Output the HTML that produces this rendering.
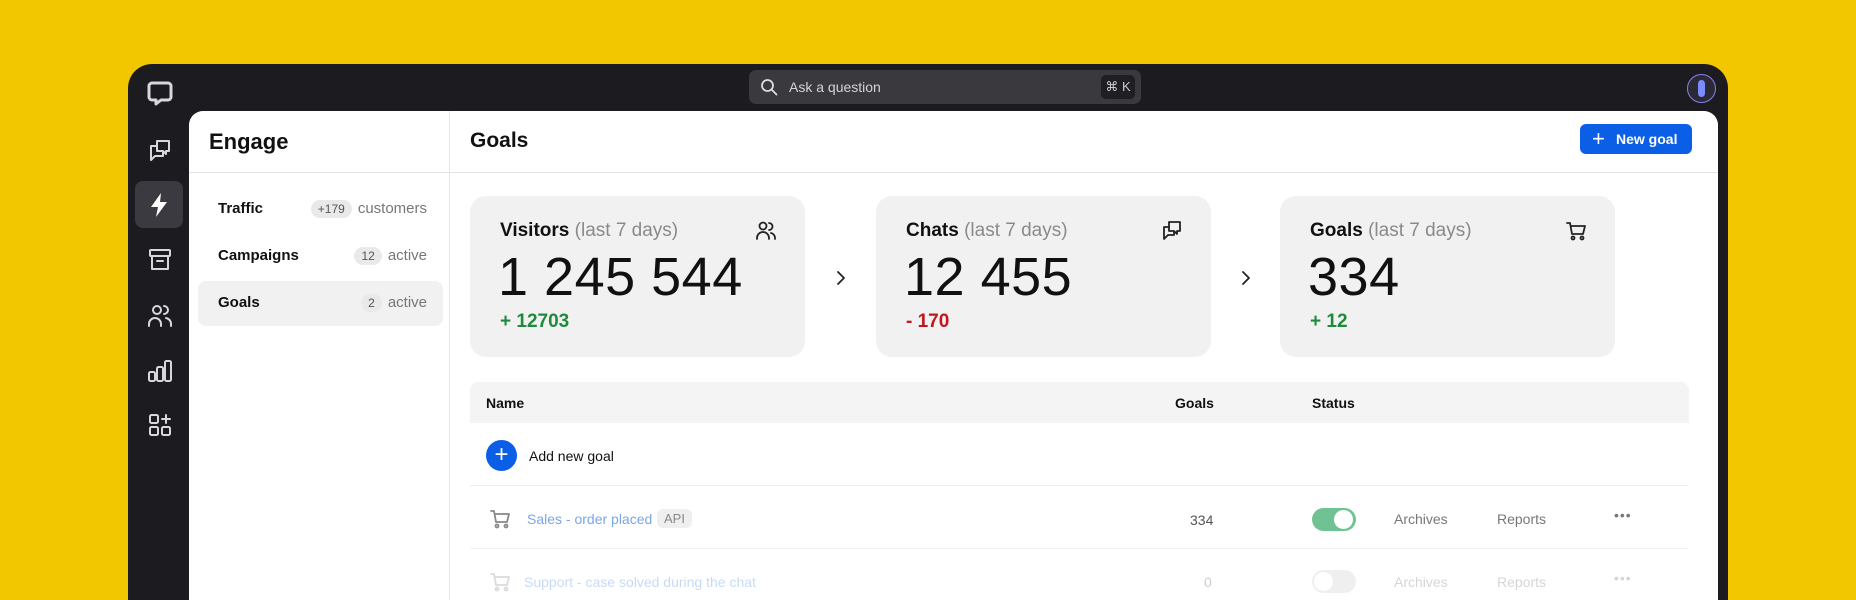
<!DOCTYPE html>
<html><head><style>
*{box-sizing:border-box;margin:0;padding:0}
html,body{width:1856px;height:600px;overflow:hidden}
body{background:#f2c700;font-family:"Liberation Sans",sans-serif;position:relative}
.frame{position:absolute;left:128px;top:64px;width:1600px;height:536px;background:#1c1b20;border-radius:24px 24px 0 0}
.panel{position:absolute;left:189px;top:111px;width:1529px;height:489px;background:#fff;border-radius:14px 14px 0 0;overflow:hidden}
.abs{position:absolute}
.ico{position:absolute;stroke:#d8d8dc;fill:none;stroke-width:2;stroke-linecap:round;stroke-linejoin:round}
.search{position:absolute;left:749px;top:70px;width:392px;height:34px;background:#3a393e;border-radius:7px}
.card{position:absolute;top:85px;width:335px;height:161px;background:#f1f1f1;border-radius:16px}
.card .t{position:absolute;left:30px;top:24px;font-size:19px;font-weight:bold;color:#111}
.card .t span{color:#8a8a8a;font-weight:normal}
.card .n{position:absolute;left:28px;top:50px;font-size:54px;color:#111;letter-spacing:0.5px}
.card .d{position:absolute;left:30px;top:115px;font-size:19px;font-weight:bold}
.nav{position:absolute;left:9px;width:245px;height:45px;border-radius:8px;font-size:15px}
.nav b{position:absolute;left:20px;top:13px;color:#111}
.nav .r{position:absolute;right:16px;top:13px;color:#777}
.badge{display:inline-block;background:#e9e9e9;border-radius:9px;font-size:12px;padding:2px 7px;margin-right:6px;color:#555}
.svgi{stroke:#222;fill:none;stroke-width:1.8;stroke-linecap:round;stroke-linejoin:round}
</style></head><body>
<div class="frame"></div>
<svg class="ico" style="left:146px;top:80px" width="28" height="28" viewBox="0 0 28 28"><path d="M6 3h16a3 3 0 0 1 3 3v11a3 3 0 0 1-3 3h-7l-5 4v-4H6a3 3 0 0 1-3-3V6a3 3 0 0 1 3-3z" stroke-width="3"/></svg>
<svg class="ico" style="left:147px;top:138px" width="26" height="26" viewBox="0 0 26 26"><path d="M10 3h12v10h-3v3l-3-3h-6z"/><path d="M10 8H4v14l4-4h8v-4"/></svg>
<div class="abs" style="left:135px;top:181px;width:48px;height:47px;background:#3b3a40;border-radius:8px"></div>
<svg class="abs" style="left:148px;top:192px" width="22" height="26" viewBox="0 0 22 26"><path d="M13 1L3 15h7l-2 10 11-15h-7z" fill="#fff"/></svg>
<svg class="ico" style="left:147px;top:247px" width="26" height="26" viewBox="0 0 26 26"><rect x="3" y="3" width="20" height="6" rx="1"/><path d="M5 9v13h16V9M10 14h6"/></svg>
<svg class="ico" style="left:146px;top:302px" width="28" height="28" viewBox="0 0 28 28"><circle cx="11" cy="8" r="4"/><path d="M3 24v-2a6 6 0 0 1 12 0v2M18 4a4 4 0 0 1 0 8M20 16a6 6 0 0 1 5 6v2"/></svg>
<svg class="ico" style="left:147px;top:358px" width="26" height="26" viewBox="0 0 26 26"><rect x="2" y="14" width="6" height="9" rx="1.5"/><rect x="10" y="9" width="6" height="14" rx="1.5"/><rect x="18" y="3" width="6" height="20" rx="1.5"/></svg>
<svg class="ico" style="left:147px;top:412px" width="26" height="26" viewBox="0 0 26 26"><rect x="3" y="3" width="8" height="8" rx="1.5"/><rect x="3" y="15" width="8" height="8" rx="1.5"/><rect x="15" y="15" width="8" height="8" rx="1.5"/><path d="M19 3v8M15 7h8"/></svg>
<div class="search">
<svg class="abs" style="left:11px;top:8px" width="18" height="18" viewBox="0 0 18 18"><circle cx="7.5" cy="7.5" r="5.5" stroke="#ddd" stroke-width="1.8" fill="none"/><path d="M12 12l4.5 4.5" stroke="#ddd" stroke-width="1.8" stroke-linecap="round"/></svg>
<div class="abs" style="left:40px;top:9px;color:#d4d4d4;font-size:14px">Ask a question</div>
<div class="abs" style="right:6px;top:5px;width:34px;height:24px;background:#1f1e22;border-radius:5px;color:#ccc;font-size:13px;text-align:center;line-height:24px">⌘ K</div>
</div>
<div class="abs" style="left:1687px;top:74px;width:29px;height:29px;border-radius:50%;background:#2a2a35;border:1.5px solid #8b7cf0"></div>
<div class="abs" style="left:1698px;top:80px;width:7px;height:17px;border-radius:4px;background:#7c8cff"></div>
<div class="panel">
 <div class="abs" style="left:0;top:61px;width:1529px;height:1px;background:#e3e3e3"></div>
 <div class="abs" style="left:260px;top:0;width:1px;height:489px;background:#e6e6e6"></div>
 <div class="abs" style="left:20px;top:18px;font-size:22px;font-weight:bold;color:#111">Engage</div>
 <div class="nav" style="top:76px"><b>Traffic</b><span class="r"><span class="badge">+179</span>customers</span></div>
 <div class="nav" style="top:123px"><b>Campaigns</b><span class="r"><span class="badge">12</span>active</span></div>
 <div class="nav" style="top:170px;background:#f1f1f1"><b>Goals</b><span class="r"><span class="badge">2</span>active</span></div>
 <div class="abs" style="left:281px;top:18px;font-size:21px;font-weight:bold;color:#111">Goals</div>
 <div class="abs" style="left:1391px;top:13px;width:112px;height:30px;background:#0b5fe6;border-radius:6px;color:#fff;font-size:14px;font-weight:bold;line-height:30px;padding-left:36px">New goal</div>
 <div class="abs" style="left:1403px;top:18px;color:#fff;font-size:22px;line-height:20px">+</div>
 <div class="card" style="left:281px"><div class="t">Visitors <span>(last 7 days)</span></div><div class="n">1 245 544</div><div class="d" style="color:#1f8a3e">+ 12703</div>
 <svg class="abs svgi" style="left:285px;top:24px" width="22" height="22" viewBox="0 0 22 22"><circle cx="8" cy="6" r="3.5"/><path d="M2 19v-1a6 6 0 0 1 12 0v1M14 3a3.5 3.5 0 0 1 0 7M16 13a5 5 0 0 1 4 5v1"/></svg></div>
 <div class="card" style="left:687px"><div class="t">Chats <span>(last 7 days)</span></div><div class="n">12 455</div><div class="d" style="color:#c0161e">- 170</div>
 <svg class="abs svgi" style="left:285px;top:24px" width="22" height="22" viewBox="0 0 22 22"><path d="M8 2h11v9h-3v3l-3-3H8z"/><path d="M8 7H3v12l4-4h6v-3"/></svg></div>
 <div class="card" style="left:1091px"><div class="t">Goals <span>(last 7 days)</span></div><div class="n">334</div><div class="d" style="color:#1f8a3e">+ 12</div>
 <svg class="abs svgi" style="left:285px;top:24px" width="22" height="22" viewBox="0 0 22 22"><path d="M2 3h3l2 11h11l2-8H6"/><circle cx="8" cy="18" r="1.5"/><circle cx="17" cy="18" r="1.5"/></svg></div>
 <svg class="abs svgi" style="left:646px;top:158px" width="12" height="18" viewBox="0 0 12 18"><path d="M3 3l6 6-6 6"/></svg>
 <svg class="abs svgi" style="left:1051px;top:158px" width="12" height="18" viewBox="0 0 12 18"><path d="M3 3l6 6-6 6"/></svg>
 <div class="abs" style="left:281px;top:271px;width:1219px;height:41px;background:#f4f4f4;border-radius:8px 8px 0 0"></div>
 <div class="abs" style="left:297px;top:284px;font-size:14px;font-weight:bold;color:#111">Name</div>
 <div class="abs" style="left:986px;top:284px;font-size:14px;font-weight:bold;color:#111">Goals</div>
 <div class="abs" style="left:1123px;top:284px;font-size:14px;font-weight:bold;color:#111">Status</div>
 <div class="abs" style="left:297px;top:329px;width:31px;height:31px;border-radius:50%;background:#0b5fe6;color:#fff;font-size:24px;text-align:center;line-height:29px">+</div>
 <div class="abs" style="left:340px;top:337px;font-size:14px;color:#111">Add new goal</div>
 <div class="abs" style="left:281px;top:374px;width:1219px;height:1px;background:#efefef"></div>
 <svg class="abs" style="left:300px;top:397px" width="22" height="22" viewBox="0 0 22 22" stroke="#888" fill="none" stroke-width="1.8" stroke-linecap="round" stroke-linejoin="round"><path d="M2 3h3l2 11h11l2-8H6"/><circle cx="8" cy="18" r="1.5"/><circle cx="17" cy="18" r="1.5"/></svg>
 <div class="abs" style="left:338px;top:400px;font-size:14px;color:#7aa6e8">Sales - order placed</div>
 <div class="abs" style="left:468px;top:398px;font-size:13px;color:#888;background:#efefef;border-radius:6px;padding:2px 7px">API</div>
 <div class="abs" style="left:1001px;top:401px;font-size:14px;color:#555">334</div>
 <div class="abs" style="left:1123px;top:397px;width:44px;height:23px;border-radius:12px;background:#6fc392"></div>
 <div class="abs" style="left:1145px;top:399px;width:19px;height:19px;border-radius:50%;background:#fff"></div>
 <div class="abs" style="left:1205px;top:400px;font-size:14px;color:#777">Archives</div>
 <div class="abs" style="left:1308px;top:400px;font-size:14px;color:#777">Reports</div>
 <div class="abs" style="left:1425px;top:396px;font-size:14px;color:#777;letter-spacing:1px">•••</div>
 <div class="abs" style="left:281px;top:437px;width:1219px;height:1px;background:#f3f3f3"></div>
 <div style="opacity:0.3">
 <svg class="abs" style="left:300px;top:460px" width="22" height="22" viewBox="0 0 22 22" stroke="#888" fill="none" stroke-width="1.8" stroke-linecap="round" stroke-linejoin="round"><path d="M2 3h3l2 11h11l2-8H6"/><circle cx="8" cy="18" r="1.5"/><circle cx="17" cy="18" r="1.5"/></svg>
 <div class="abs" style="left:335px;top:463px;font-size:14px;color:#4a86e0">Support - case solved during the chat</div>
 <div class="abs" style="left:1015px;top:463px;font-size:14px;color:#555">0</div>
 <div class="abs" style="left:1123px;top:459px;width:44px;height:23px;border-radius:12px;background:#ccc"></div>
 <div class="abs" style="left:1125px;top:461px;width:19px;height:19px;border-radius:50%;background:#fff"></div>
 <div class="abs" style="left:1205px;top:463px;font-size:14px;color:#777">Archives</div>
 <div class="abs" style="left:1308px;top:463px;font-size:14px;color:#777">Reports</div>
 <div class="abs" style="left:1425px;top:459px;font-size:14px;color:#777;letter-spacing:1px">•••</div>
 </div>
</div>
</body></html>
